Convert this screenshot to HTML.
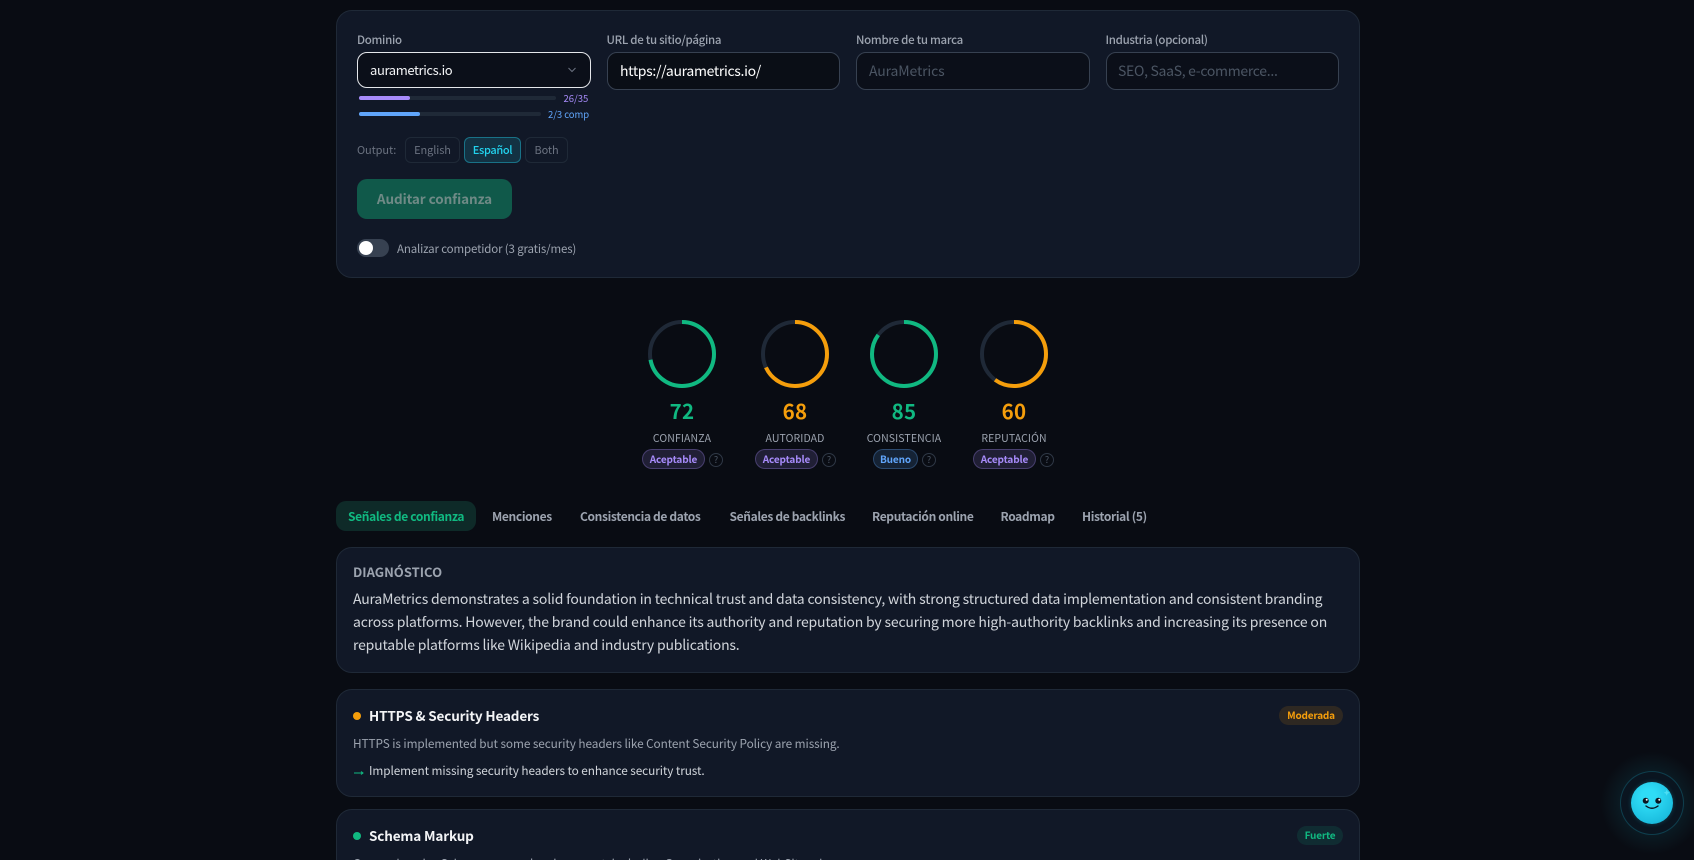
<!DOCTYPE html>
<html lang="es"><head><meta charset="utf-8"><title>Auditar confianza</title>
<style>
*{box-sizing:border-box;margin:0;padding:0}
html,body{width:1694px;height:860px;overflow:hidden;background:#090c13}
body{position:relative;font-family:"Noto Sans CJK JP","Liberation Sans",sans-serif;color:#e5e7eb}
.a,.t{position:absolute}
.t{white-space:nowrap;line-height:20px;height:20px}
.card{position:absolute;left:336px;width:1024px;background:#111827;border:1px solid #1f2937;border-radius:16px}
#clip{position:absolute;left:0;top:0;width:1694px;height:860px;overflow:hidden}
.lab{font-size:11.5px;color:#9ca3af;font-weight:500;top:29.5px;letter-spacing:-.3px}
.inp{position:absolute;height:38px;width:233.5px;top:52px;background:#0b0f19;border:1px solid #374151;border-radius:10px}
.seg{position:absolute;top:137px;height:26px;border:1px solid #1f2937;border-radius:6px;font-size:11px;color:#6b7280;text-align:center;line-height:24px;letter-spacing:-.1px}
.ring{position:absolute;top:319.5px;width:68px;height:68px}
.num{top:399.5px;width:80px;text-align:center;font-size:20.5px;font-weight:700;letter-spacing:.3px}
.rl{top:428.5px;width:120px;text-align:center;font-size:10.5px;color:#9ca3af;letter-spacing:.1px}
.pill{position:absolute;top:449px;height:20px;border-radius:10px;font-size:10px;font-weight:700;line-height:18px;text-align:center;letter-spacing:-.13px}
.pu{background:rgba(167,139,250,.15);border:1px solid rgba(167,139,250,.3);color:#a78bfa}
.bl{background:rgba(96,165,250,.15);border:1px solid rgba(96,165,250,.3);color:#60a5fa}
.q{position:absolute;top:452.5px;width:14px;height:14px;border:1px solid #2f3846;border-radius:50%;font-size:9px;line-height:12px;text-align:center;color:#4b5563}
.tab{top:507px;font-size:12px;font-weight:600;color:#9ca3af;letter-spacing:-.35px}
.body{left:353px;font-size:14px;color:#d1d5db;letter-spacing:-.18px}
.ttl{font-size:13.5px;font-weight:700;color:#f3f4f6;letter-spacing:-.15px}
.sm{font-size:11.8px;letter-spacing:-.08px}
.sev{position:absolute;height:19px;border-radius:10px;font-size:10px;font-weight:600;line-height:18px;text-align:center;letter-spacing:-.2px}
</style></head><body><div id="clip">

<div class="card" style="top:10px;height:268px"></div>
<div class="t lab" style="left:357px">Dominio</div>
<div class="t lab" style="left:606.5px">URL de tu sitio/página</div>
<div class="t lab" style="left:856px">Nombre de tu marca</div>
<div class="t lab" style="left:1105.5px">Industria (opcional)</div>

<div class="a" style="left:357px;top:52px;width:234px;height:36px;background:#0b0f19;border:1.5px solid #e5e7eb;border-radius:10px"></div>
<div class="t" style="left:370px;top:60px;font-size:13px;letter-spacing:-.38px;color:#f3f4f6">aurametrics.io</div>
<svg class="a" style="left:567px;top:66px" width="10" height="8" viewBox="0 0 10 8"><path d="M1.5 2l3.5 3.5L8.5 2" fill="none" stroke="#6b7280" stroke-width="1"/></svg>

<div class="inp" style="left:606.5px;background:#0a0e16"></div>
<div class="t" style="left:620px;top:61px;font-size:14px;letter-spacing:-.32px;color:#fff">https://aurametrics.io/</div>
<div class="inp" style="left:856px"></div>
<div class="t" style="left:869px;top:61px;font-size:14px;letter-spacing:-.14px;color:#4b5563">AuraMetrics</div>
<div class="inp" style="left:1105.5px"></div>
<div class="t" style="left:1118px;top:61px;font-size:14px;letter-spacing:-.3px;color:#4b5563">SEO, SaaS, e-commerce...</div>

<div class="a" style="left:359px;top:96px;width:197px;height:4px;border-radius:2px;background:#1f2937"></div>
<div class="a" style="left:359px;top:96px;width:51px;height:4px;border-radius:2px;background:#a78bfa"></div>
<div class="t" style="left:563.5px;top:88px;font-size:9.5px;color:#a78bfa">26/35</div>
<div class="a" style="left:359px;top:112px;width:182px;height:4px;border-radius:2px;background:#1f2937"></div>
<div class="a" style="left:359px;top:112px;width:61px;height:4px;border-radius:2px;background:#60a5fa"></div>
<div class="t" style="left:548px;top:104px;font-size:9.5px;letter-spacing:-.05px;color:#60a5fa">2/3 comp</div>

<div class="t" style="left:357px;top:140px;font-size:11px;letter-spacing:-.1px;color:#6b7280">Output:</div>
<div class="seg" style="left:405px;width:55px">English</div>
<div class="seg" style="left:464px;width:57px;background:rgba(34,211,238,.14);border-color:rgba(34,211,238,.4);color:#22d3ee;font-weight:500;letter-spacing:-.35px">Español</div>
<div class="seg" style="left:525px;width:43px">Both</div>

<div class="a" style="left:357px;top:179px;width:155px;height:40px;border-radius:10px;background:#10594a"></div>
<div class="t" style="left:357px;top:188px;width:155px;text-align:center;font-size:13.5px;letter-spacing:-.08px;font-weight:700;color:#6f8a86">Auditar confianza</div>

<div class="a" style="left:357px;top:239px;width:32px;height:18px;border-radius:9px;background:#374151"></div>
<div class="a" style="left:359px;top:241px;width:14px;height:14px;border-radius:50%;background:#fff"></div>
<div class="t" style="left:397px;top:238.5px;font-size:11.5px;letter-spacing:-.15px;color:#9ca3af">Analizar competidor (3 gratis/mes)</div>

<svg class="ring" style="left:648px" viewBox="0 0 68 68"><circle cx="34" cy="34" r="32" fill="none" stroke="#1f2937" stroke-width="4"/><circle cx="34" cy="34" r="32" fill="none" stroke="#10b981" stroke-width="4" stroke-dasharray="144.8 201.1" transform="rotate(-90 34 34)"/></svg>
<svg class="ring" style="left:761px" viewBox="0 0 68 68"><circle cx="34" cy="34" r="32" fill="none" stroke="#1f2937" stroke-width="4"/><circle cx="34" cy="34" r="32" fill="none" stroke="#f59e0b" stroke-width="4" stroke-dasharray="136.7 201.1" transform="rotate(-90 34 34)"/></svg>
<svg class="ring" style="left:870px" viewBox="0 0 68 68"><circle cx="34" cy="34" r="32" fill="none" stroke="#1f2937" stroke-width="4"/><circle cx="34" cy="34" r="32" fill="none" stroke="#10b981" stroke-width="4" stroke-dasharray="170.9 201.1" transform="rotate(-90 34 34)"/></svg>
<svg class="ring" style="left:980px" viewBox="0 0 68 68"><circle cx="34" cy="34" r="32" fill="none" stroke="#1f2937" stroke-width="4"/><circle cx="34" cy="34" r="32" fill="none" stroke="#f59e0b" stroke-width="4" stroke-dasharray="120.6 201.1" transform="rotate(-90 34 34)"/></svg>

<div class="t num" style="left:642px;color:#10b981">72</div>
<div class="t num" style="left:755px;color:#f59e0b">68</div>
<div class="t num" style="left:864px;color:#10b981">85</div>
<div class="t num" style="left:974px;color:#f59e0b">60</div>

<div class="t rl" style="left:622px">CONFIANZA</div>
<div class="t rl" style="left:735px">AUTORIDAD</div>
<div class="t rl" style="left:844px">CONSISTENCIA</div>
<div class="t rl" style="left:954px">REPUTACIÓN</div>

<div class="pill pu" style="left:642px;width:63px">Aceptable</div><div class="q" style="left:709px">?</div>
<div class="pill pu" style="left:755px;width:63px">Aceptable</div><div class="q" style="left:822px">?</div>
<div class="pill bl" style="left:873px;width:45px">Bueno</div><div class="q" style="left:922px">?</div>
<div class="pill pu" style="left:973px;width:63px">Aceptable</div><div class="q" style="left:1040px">?</div>

<div class="a" style="left:336px;top:501px;width:140px;height:30px;border-radius:10px;background:#0e2a28"></div>
<div class="t tab" style="left:348px;color:#10b981">Señales de confianza</div>
<div class="t tab" style="left:492px">Menciones</div>
<div class="t tab" style="left:580px">Consistencia de datos</div>
<div class="t tab" style="left:729.5px">Señales de backlinks</div>
<div class="t tab" style="left:872px">Reputación online</div>
<div class="t tab" style="left:1000.5px">Roadmap</div>
<div class="t tab" style="left:1082px">Historial (5)</div>

<div class="card" style="top:547px;height:126px"></div>
<div class="t" style="left:353px;top:562px;font-size:13px;font-weight:700;color:#9ca3af">DIAGNÓSTICO</div>
<div class="t body" style="top:589px">AuraMetrics demonstrates a solid foundation in technical trust and data consistency, with strong structured data implementation and consistent branding</div>
<div class="t body" style="top:612px">across platforms. However, the brand could enhance its authority and reputation by securing more high-authority backlinks and increasing its presence on</div>
<div class="t body" style="top:635px">reputable platforms like Wikipedia and industry publications.</div>

<div class="card" style="top:689px;height:108px"></div>
<div class="a" style="left:353px;top:712px;width:8px;height:8px;border-radius:50%;background:#f59e0b"></div>
<div class="t ttl" style="left:369px;top:705px">HTTPS &amp; Security Headers</div>
<div class="sev" style="left:1279px;top:706px;width:64px;background:rgba(245,158,11,.13);color:#f59e0b">Moderada</div>
<div class="t sm" style="left:353px;top:734px;color:#9ca3af">HTTPS is implemented but some security headers like Content Security Policy are missing.</div>
<svg class="a" style="left:353px;top:769px" width="12" height="8" viewBox="0 0 12 8"><path d="M1 4h9M8 2.5L10 4 8 5.5" fill="none" stroke="#10b981" stroke-width="1"/></svg>
<div class="t sm" style="left:369px;top:761px;color:#d1d5db">Implement missing security headers to enhance security trust.</div>

<div class="card" style="top:809px;height:120px"></div>
<div class="a" style="left:353px;top:832px;width:8px;height:8px;border-radius:50%;background:#10b981"></div>
<div class="t ttl" style="left:369px;top:825px">Schema Markup</div>
<div class="sev" style="left:1297px;top:826px;width:46px;background:rgba(16,185,129,.13);color:#10b981">Fuerte</div>
<div class="t sm" style="left:353px;top:854px;color:#9ca3af">Comprehensive Schema.org markup is present, including Organization and WebSite schema.</div>

<div class="a" style="left:1600px;top:751px;width:104px;height:104px;border-radius:50%;background:radial-gradient(circle,rgba(34,211,238,.08) 40%,rgba(34,211,238,0) 70%)"></div>
<div class="a" style="left:1620px;top:771px;width:64px;height:64px;border-radius:50%;border:1px solid rgba(34,211,238,.22);background:#0a1520"></div>
<div class="a" style="left:1631px;top:782px;width:42px;height:42px;border-radius:50%;background:radial-gradient(circle at 42% 35%,#2fdcf6 20%,#1cbfe0 70%,#129fc2);box-shadow:0 0 5px rgba(34,211,238,.25)"></div>
<svg class="a" style="left:1631px;top:782px" width="42" height="42" viewBox="0 0 42 42"><circle cx="14.7" cy="18.7" r="3" fill="#0b1622"/><circle cx="27.3" cy="18.7" r="3" fill="#0b1622"/><circle cx="15.7" cy="17.7" r="1" fill="#fff"/><circle cx="28.3" cy="17.7" r="1" fill="#fff"/><path d="M15 24q6 4.5 12 0" fill="none" stroke="#0b1622" stroke-width="1.4" stroke-linecap="round"/><path d="M35.7 7.7l.9 2.1 2.1.9-2.1.9-.9 2.1-.9-2.1-2.1-.9 2.1-.9z" fill="#5ee7fa" opacity=".7"/></svg>

</div></body></html>
